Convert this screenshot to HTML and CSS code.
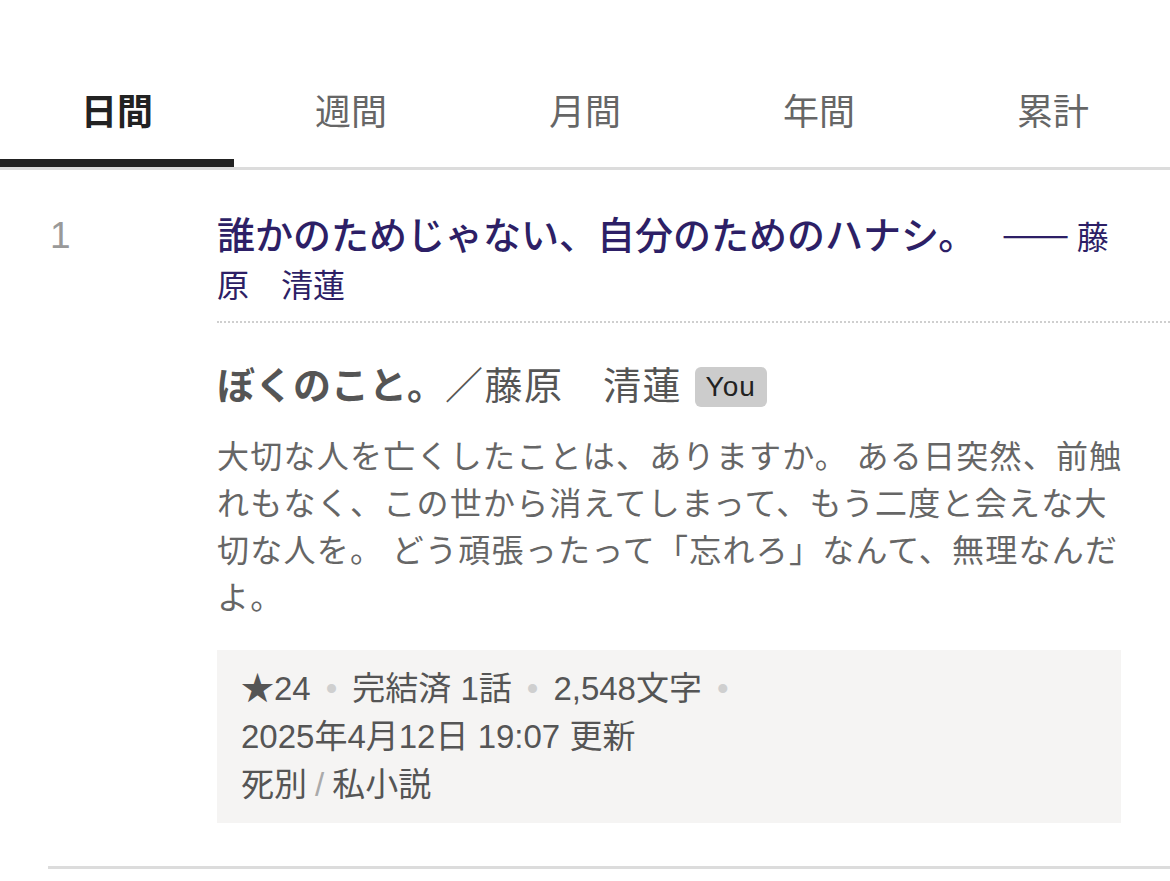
FILE: index.html
```html
<!DOCTYPE html>
<html lang="ja">
<head>
<meta charset="utf-8">
<title>ランキング</title>
<link rel="stylesheet" href="styles.css">
</head>
<body>
<nav class="tabs">
  <a class="tab active">日間</a>
  <a class="tab">週間</a>
  <a class="tab">月間</a>
  <a class="tab">年間</a>
  <a class="tab">累計</a>
</nav>
<section class="entry">
  <div class="rank">1</div>
  <div class="main">
    <div class="head">
      <span class="catch">誰かのためじゃない、自分のためのハナシ。</span> <span class="catch-author"><span class="dash">――</span>藤原　清蓮</span>
    </div>
    <div class="body">
      <h2 class="work"><span class="work-title">ぼくのこと。</span><span class="work-author">／藤原　清蓮</span> <span class="badge">You</span></h2>
      <p class="desc">大切な人を亡くしたことは、ありますか。 ある日突然、前触れもなく、この世から消えてしまって、もう二度と会えな大切な人を。 どう頑張ったって「忘れろ」なんて、無理なんだよ。</p>
      <div class="meta">
        <div class="meta-line"><span class="item">★24</span><span class="dot">•</span><span class="item">完結済 1話</span><span class="dot">•</span><span class="item">2,548文字</span><span class="dot">•</span> <span class="item nowrap">2025年4月12日 19:07 更新</span></div>
        <div class="meta-line"><span class="item">死別</span><span class="sep">/</span><span class="item">私小説</span></div>
      </div>
    </div>
  </div>
</section>
</body>
</html>
```

FILE: styles.css
```css
* { box-sizing: border-box; }
html, body { margin: 0; padding: 0; background: #fff; }
body {
  font-family: "Noto Sans CJK JP", "Liberation Sans", sans-serif;
  color: #555;
}

.tabs {
  display: grid;
  grid-template-columns: repeat(5, 1fr);
  border-bottom: 3px solid #dcdcdc;
}
.tab {
  display: block;
  text-align: center;
  font-size: 36px;
  line-height: 48px;
  padding-top: 85px;
  padding-bottom: 26px;
  color: #666;
  border-bottom: 8px solid transparent;
}
.tab.active {
  color: #222;
  font-weight: 700;
  border-bottom-color: #222;
}

.entry {
  display: grid;
  grid-template-columns: 169px 1fr;
  margin-left: 48px;
  border-bottom: 3px solid #dcdcdc;
  padding-bottom: 43px;
}
.rank {
  font-family: "Liberation Sans", sans-serif;
  font-size: 37px;
  line-height: 48px;
  color: #999;
  padding-top: 42px;
  padding-left: 2px;
}

.head {
  padding-top: 39px;
  padding-right: 49px;
  padding-bottom: 16px;
  border-bottom: 2px dotted #cfcfcf;
  font-size: 38px;
  line-height: 48px;
  color: #2d1f66;
}
.catch {
  font-size: 38px;
  line-height: 1;
  font-weight: 500;
}
.catch-author {
  font-size: 32px;
  line-height: 1;
  margin-left: 16px;
}
.dash {
  display: inline-block;
  font-weight: 700;
  margin-right: 12px;
  transform: scale(1.08, 1.6);
  transform-origin: 0 50%;
}

.body { padding-right: 49px; }

.work {
  margin: 36px 0 0;
  font-size: 38px;
  line-height: 48px;
  font-weight: 400;
  color: #555;
}
.work-title { font-weight: 700; }
.work-author { letter-spacing: 1.5px; }
.badge {
  display: inline-block;
  font-family: "Liberation Sans", sans-serif;
  font-size: 28px;
  line-height: 40px;
  padding: 0 11px;
  margin-left: 4px;
  background: #cccccc;
  color: #222;
  border-radius: 6px;
  vertical-align: 3px;
  letter-spacing: 1px;
}

.desc {
  margin: 24px -8px 0 0;
  font-size: 32px;
  letter-spacing: 1.25px;
  line-height: 47px;
  color: #666;
}

.meta {
  margin-top: 31px;
  background: #f5f4f3;
  padding: 15px 24px 14px;
  font-family: "Liberation Sans", "Noto Sans CJK JP", sans-serif;
  font-size: 33px;
  line-height: 48px;
  color: #555;
}
.nowrap { white-space: nowrap; }
.dot {
  color: #cfcfcf;
  margin: 0 15px;
}
.sep {
  color: #aaa;
  margin: 0 8px;
}
```
